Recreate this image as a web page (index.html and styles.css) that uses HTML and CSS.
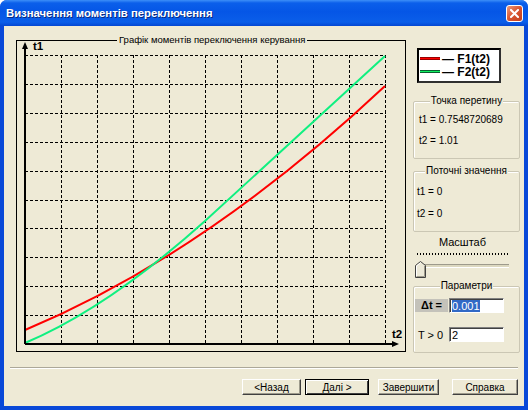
FILE: index.html
```html
<!DOCTYPE html>
<html lang="uk">
<head>
    <meta charset="UTF-8">
    <title>Визначення моментів переключення</title>
    <link rel="stylesheet" href="styles.css">
</head>
<body>
    <div class="window">
        <div class="titlebar">
            <span class="title">Визначення моментів переключення</span>
            <span class="close">
                <svg width="9" height="9" viewBox="0 0 9 9"><path d="M1 1 L8 8 M8 1 L1 8" stroke="#fff" stroke-width="2" stroke-linecap="square"/></svg>
            </span>
        </div>
        <div class="client">
            <div class="main">
                <div class="chart">
                    <span class="chart-caption">Графік моментів переключення керування</span>
                    <svg class="plot" width="388" height="310" viewBox="17 41 388 310">
                        <g stroke="#000" stroke-width="1" stroke-dasharray="3 2" fill="none">
                            <path d="M61.5 55 V344 M97.5 55 V344 M133.5 55 V344 M169.5 55 V344 M205.5 55 V344 M241.5 55 V344 M277.5 55 V344 M313.5 55 V344 M349.5 55 V344 M385.5 55 V344"/>
                            <path d="M25 55.5 H386 M25 84.5 H386 M25 113.5 H386 M25 142.5 H386 M25 171.5 H386 M25 200.5 H386 M25 228.5 H386 M25 257.5 H386 M25 286.5 H386 M25 315.5 H386"/>
                        </g>
                        <!-- F1: quadratic, F2: curve then nearly straight -->
                        <path fill="none" stroke="#ff0000" stroke-width="2" d="M25 330 Q205 255 385 86"/>
                        <path fill="none" stroke="#10f080" stroke-width="2" d="M25 343 Q108 308 205 221 L385 56"/>
                        <g stroke="#000" stroke-width="2" fill="none">
                            <path d="M25 344 V47"/>
                            <path d="M25 344 H394"/>
                        </g>
                        <path d="M22 49 L25 42 L28 49 Z" fill="#000"/>
                        <path d="M392 341 L399 344 L392 347 Z" fill="#000"/>
                        <text x="33" y="50" class="axis-label">t1</text>
                        <text x="392" y="338" class="axis-label">t2</text>
                    </svg>
                </div>
                <div class="side">
                    <div class="legend">
                        <div class="legend-row"><span class="swatch red"></span>— F1(t2)</div>
                        <div class="legend-row"><span class="swatch green"></span>— F2(t2)</div>
                    </div>
                    <div class="group cross">
                        <span class="group-title">Точка перетину</span>
                        <div class="val">t1 = 0.7548720689</div>
                        <div class="val">t2 = 1.01</div>
                    </div>
                    <div class="group current">
                        <span class="group-title">Поточні значення</span>
                        <div class="val">t1 = 0</div>
                        <div class="val">t2 = 0</div>
                    </div>
                    <div class="scale-label">Масштаб</div>
                    <div class="slider">
                        <div class="ticks"></div>
                        <div class="track"></div>
                        <svg class="thumb" width="11" height="17" viewBox="0 0 11 17">
                            <path d="M0.5 16.5 V4.5 L5.5 0.5 L10.5 4.5 V16.5 Z" fill="#ece9d8" stroke="#404040"/>
                            <path d="M1.5 15.5 V5 L5.5 1.8" fill="none" stroke="#fff"/>
                            <path d="M9.5 5 V15.5 H1.5" fill="none" stroke="#9d9a8c"/>
                        </svg>
                    </div>
                    <div class="group params">
                        <span class="group-title">Параметри</span>
                        <div class="param-row">
                            <span class="delta">Δt =</span>
                            <span class="field"><span class="selected">0.001</span></span>
                        </div>
                        <div class="param-row">
                            <span class="plain">T &gt; 0</span>
                            <span class="field">2</span>
                        </div>
                    </div>
                </div>
            </div>
            <div class="separator"></div>
            <div class="buttons">
                <button class="btn back">&lt;Назад</button>
                <button class="btn next default">Далі &gt;</button>
                <button class="btn finish">Завершити</button>
                <button class="btn help">Справка</button>
            </div>
        </div>
    </div>
</body>
</html>
```

FILE: styles.css
```css
body {
    margin: 0;
    font-family: 'Liberation Sans', Arial, sans-serif;
    font-size: 10px;
    color: #000;
    background: #fff;
}
.window {
    width: 528px;
    height: 410px;
    display: flex;
    flex-direction: column;
    background: #0848d8;
    border-radius: 7px 7px 0 0;
    overflow: hidden;
}
.titlebar {
    height: 26px;
    flex: none;
    display: flex;
    align-items: center;
    justify-content: space-between;
    padding: 0 5px 0 6px;
    background: linear-gradient(#3d8ff8 0, #0b5fea 3px, #0556e6 45%, #0a5ee9 85%, #0447d2 100%);
}
.title {
    color: #fff;
    font-weight: bold;
    font-size: 11.3px;
    text-shadow: 1px 1px 0 #0a2a80;
}
.close {
    width: 17px;
    height: 17px;
    box-sizing: border-box;
    border: 1px solid #fff;
    border-radius: 3px;
    background: linear-gradient(135deg, #ec9a7c 0, #d9542f 50%, #c2401d 100%);
    display: flex;
    align-items: center;
    justify-content: center;
}
.client {
    flex: 1;
    margin: 0 4px 4px;
    background: #eeead6;
    padding: 14px 6px 0 12px;
}
.main {
    display: flex;
    gap: 7px;
}
.chart {
    position: relative;
    width: 390px;
    height: 312px;
    box-sizing: border-box;
    border: 1px solid #000;
    flex: none;
}
.chart-caption {
    position: absolute;
    top: -7px;
    left: 100px;
    padding: 0 2px;
    line-height: 12px;
    font-size: 9.5px;
    background: #eeead6;
    white-space: nowrap;
}
.plot {
    display: block;
    overflow: visible;
}
.axis-label {
    font-family: 'Liberation Sans', Arial, sans-serif;
    font-weight: bold;
    font-size: 11.5px;
}
.side {
    width: 107px;
    flex: none;
}
.legend {
    margin: 8px 0 0 4px;
    width: 84px;
    height: 35px;
    box-sizing: border-box;
    background: #fff;
    border: 2px solid;
    border-color: #000 #303030 #303030 #000;
    padding: 2px 0 0 1px;
}
.legend-row {
    display: flex;
    align-items: center;
    height: 13px;
    font-size: 12px;
    font-weight: bold;
    gap: 2px;
}
.swatch {
    width: 20px;
    height: 3px;
    box-sizing: border-box;
}
.swatch.red {
    background: #ff0000;
    border-top: 1px solid #900;
    border-bottom: 1px solid #900;
}
.swatch.green {
    background: #10f060;
    border-top: 1px solid #086030;
    border-bottom: 1px solid #086030;
}
.group {
    position: relative;
    box-sizing: border-box;
    border: 1px solid #cbc7b4;
    border-radius: 2px;
    box-shadow: inset 1px 1px 0 #fff;
}
.group-title {
    position: absolute;
    top: -7px;
    left: 0;
    right: 0;
    margin: 0 auto;
    width: max-content;
    padding: 0 1px;
    line-height: 12px;
    background: #eeead6;
}
.cross {
    margin-top: 18px;
    height: 58px;
    padding: 7px 0 0 5px;
}
.current {
    margin-top: 12px;
    height: 61px;
    padding: 9px 0 0 3px;
}
.val {
    height: 21px;
    line-height: 21px;
    white-space: nowrap;
}
.current .val {
    height: 22px;
    line-height: 22px;
}
.scale-label {
    margin-top: 4px;
    height: 13px;
    line-height: 13px;
    text-align: center;
    padding-right: 8px;
    font-size: 11px;
}
.slider {
    position: relative;
    height: 33px;
    margin-left: 4px;
    width: 92px;
}
.ticks {
    margin-top: 4px;
    height: 2px;
    background: repeating-linear-gradient(90deg, #000 0, #000 1px, transparent 1px, transparent 3px);
}
.track {
    margin-top: 9px;
    height: 2px;
    border-top: 1px solid #9d9a8c;
    border-bottom: 1px solid #fff;
    background: #dcd8c0;
}
.thumb {
    position: absolute;
    left: -2px;
    top: 8px;
}
.params {
    margin-top: 0;
    height: 67px;
    padding: 11px 0 0 1px;
}
.param-row {
    display: flex;
    align-items: center;
    height: 15px;
    margin-bottom: 14px;
}
.delta {
    width: 33px;
    height: 13px;
    line-height: 13px;
    background: #c4c2ba;
    font-weight: bold;
    font-size: 11px;
    text-align: center;
}
.plain {
    width: 33px;
    padding-left: 3px;
    box-sizing: border-box;
    font-size: 11px;
}
.field {
    margin-left: 1px;
    width: 55px;
    height: 15px;
    box-sizing: border-box;
    background: #fff;
    border: 1px solid;
    border-color: #808080 #fff #fff #808080;
    box-shadow: inset 1px 1px 0 #404040;
    padding: 1px 0 0 2px;
    font-size: 11px;
    line-height: 12px;
}
.selected {
    background: #3169c6;
    color: #fff;
}
.separator {
    margin-top: 14px;
    height: 0;
    border-top: 1px solid #aca899;
    border-bottom: 1px solid #fff;
    margin-left: -6px;
}
.buttons {
    margin-top: 10px;
    display: flex;
    justify-content: flex-end;
}
.btn {
    height: 16px;
    padding: 0;
    font-family: 'Liberation Sans', Arial, sans-serif;
    font-size: 10px;
    background: #eeead6;
    border: 1px solid;
    border-color: #fff #404040 #404040 #fff;
    box-shadow: inset -1px -1px 0 #9d9a8c;
    color: #000;
}
.back { width: 59px; }
.next { width: 64px; margin-left: 4px; }
.finish { width: 61px; margin-left: 9px; }
.help { width: 66px; margin-left: 13px; }
.btn.default {
    border: 1px solid #000;
    box-shadow: inset 1px 1px 0 #fff, inset -1px -1px 0 #404040;
}
```
